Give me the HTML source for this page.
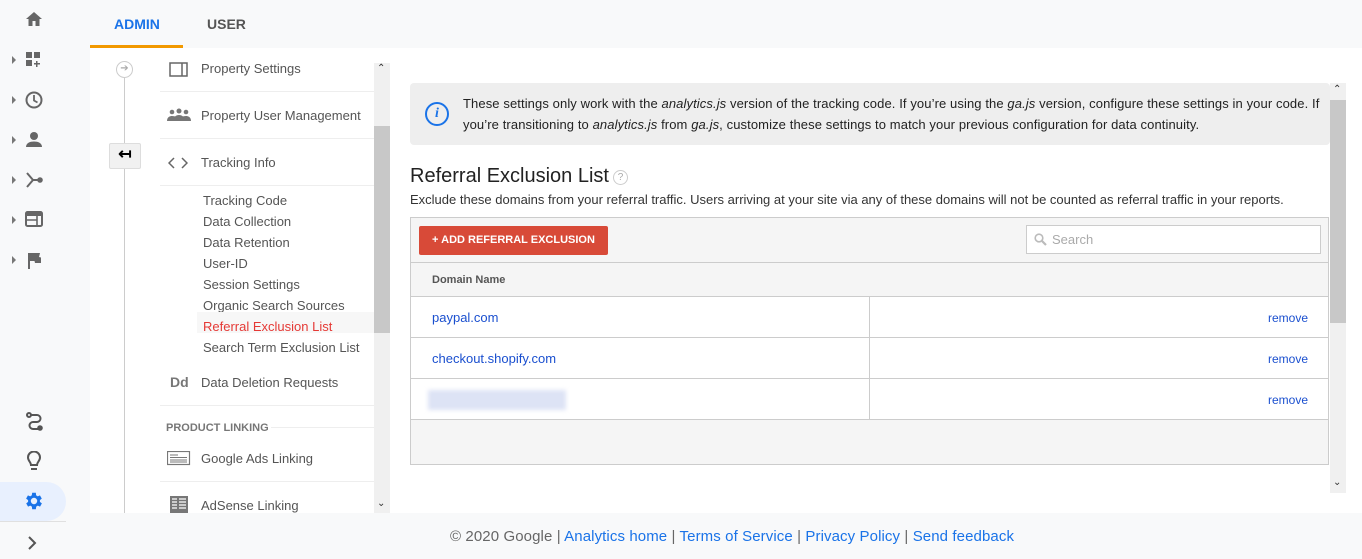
<!DOCTYPE html>
<html><head><meta charset="utf-8"><style>
*{box-sizing:border-box;margin:0;padding:0}
body{width:1362px;height:559px;overflow:hidden;background:#f8f9fa;font-family:"Liberation Sans",Arial,sans-serif;position:relative;color:#333}
.abs{position:absolute}
.nav svg{position:absolute}
.tri{position:absolute;left:12px;width:0;height:0;border-left:4px solid #777;border-top:4px solid transparent;border-bottom:4px solid transparent}
.item{position:absolute;left:160px;width:214px;font-size:13px;color:#555;border-bottom:1px solid #eee}
.item span{position:absolute;left:41px}
.sub{position:absolute;left:203px;font-size:13px;color:#555}
a{color:#1a4fcf;text-decoration:none}
</style></head><body>
<div class="nav">
<svg style="left:25px;top:11px" width="18" height="16" viewBox="0 0 18 16"><path d="M9 1L1 8h2.5v7h4v-5h3v5h4V8H17z" fill="#666"/></svg>
<div class="tri" style="top:56px"></div>
<svg style="left:25px;top:51px" width="18" height="18" viewBox="0 0 18 18" fill="#666"><rect x="1" y="1" width="6" height="6"/><rect x="9" y="1" width="6" height="6"/><rect x="1" y="9" width="6" height="6"/><path d="M11 10h1.5v2H15v1.5h-2.5V16H11v-2.5H9V12h2z"/></svg>
<div class="tri" style="top:96px"></div>
<svg style="left:24px;top:90px" width="20" height="20" viewBox="0 0 20 20"><circle cx="10" cy="10" r="7.5" fill="none" stroke="#666" stroke-width="2"/><path d="M10 5v5.5l3.5 2" fill="none" stroke="#666" stroke-width="1.8"/></svg>
<div class="tri" style="top:136px"></div>
<svg style="left:25px;top:131px" width="18" height="18" viewBox="0 0 18 18" fill="#666"><circle cx="9" cy="5" r="4"/><path d="M1 16c0-4 4-5.5 8-5.5s8 1.5 8 5.5z"/></svg>
<div class="tri" style="top:176px"></div>
<svg style="left:25px;top:171px" width="18" height="18" viewBox="0 0 18 18" fill="none" stroke="#666" stroke-width="2"><path d="M2 2l6 7-6 7M8 9h7"/><circle cx="15" cy="9" r="1.8" fill="#666"/></svg>
<div class="tri" style="top:216px"></div>
<svg style="left:25px;top:211px" width="18" height="16" viewBox="0 0 18 16"><rect x="1" y="1" width="16" height="14" rx="1.5" fill="none" stroke="#666" stroke-width="2"/><rect x="1" y="1" width="16" height="4" fill="#666"/><path d="M12 5v10M2 9h10" stroke="#666" stroke-width="1.6"/></svg>
<div class="tri" style="top:256px"></div>
<svg style="left:27px;top:252px" width="16" height="17" viewBox="0 0 16 17" fill="#666"><path d="M1 1h12l-1 4 2 .5V11H8l-.5-2H3v8H1z"/></svg>
<svg style="left:25px;top:411px" width="20" height="20" viewBox="0 0 20 20" fill="none" stroke="#555" stroke-width="2"><circle cx="4" cy="4" r="2"/><path d="M6 4h6a3.5 3.5 0 010 7H8a3.5 3.5 0 000 7h6"/><circle cx="15" cy="17" r="1.8" fill="#555"/></svg>
<svg style="left:27px;top:451px" width="14" height="20" viewBox="0 0 14 20" fill="none" stroke="#555" stroke-width="2"><path d="M4 14c0-3-3-4-3-7.5a6 6 0 0112 0c0 3.5-3 4.5-3 7.5z"/><path d="M4 18h6"/></svg>
</div>
<div class="abs" style="left:0;top:482px;width:66px;height:39px;background:#e8f0fe;border-radius:0 20px 20px 0"></div>
<svg class="abs" style="left:23px;top:490px" width="22" height="22" viewBox="0 0 24 24"><path fill="#1a73e8" d="M19.4 13a7.5 7.5 0 000-2l2.1-1.6-2-3.5-2.5 1a7 7 0 00-1.7-1L15 3h-4l-.4 2.9a7 7 0 00-1.7 1l-2.5-1-2 3.5L6.6 11a7.5 7.5 0 000 2l-2.1 1.6 2 3.5 2.5-1a7 7 0 001.7 1L11 21h4l.4-2.9a7 7 0 001.7-1l2.5 1 2-3.5zM13 15.5a3.5 3.5 0 110-7 3.5 3.5 0 010 7z" transform="translate(-1 0)"/></svg>
<div class="abs" style="left:0;top:521px;width:66px;height:1px;background:#e0e0e0"></div>
<svg class="abs" style="left:27px;top:535px" width="10" height="16" viewBox="0 0 10 16"><path d="M2 2l6 6-6 6" fill="none" stroke="#555" stroke-width="2"/></svg>

<div class="abs" style="left:114px;top:16px;font-size:14px;color:#1a73e8;font-weight:bold">ADMIN</div>
<div class="abs" style="left:207px;top:16px;font-size:14px;color:#555;font-weight:bold">USER</div>
<div class="abs" style="left:90px;top:45px;width:93px;height:3px;background:#f29900"></div>
<div class="abs" style="left:90px;top:48px;width:1272px;height:465px;background:#fff"></div>

<div class="abs" style="left:124px;top:68px;width:1px;height:445px;background:#ccc"></div>
<div class="abs" style="left:116px;top:61px;width:17px;height:17px;border:1px solid #ccc;border-radius:50%;background:#fff;font-size:10px;color:#aaa;text-align:center;line-height:14px">➔</div>
<div class="abs" style="left:109px;top:143px;width:32px;height:26px;background:#f1f1f1;border:1px solid #ddd;border-radius:2px;font-size:16px;text-align:center;line-height:22px;color:#000;font-weight:bold">↤</div>

<div class="item" style="top:48px;height:44px"><svg class="abs" style="left:9px;top:14px" width="19" height="15"><rect x="1" y="1" width="17" height="13" fill="none" stroke="#666" stroke-width="1.5"/><path d="M13 1v13" stroke="#666" stroke-width="1.5"/></svg><span style="top:13px">Property Settings</span></div>
<div class="item" style="top:92px;height:47px"><svg class="abs" style="left:7px;top:16px" width="24" height="14" fill="#777"><circle cx="5" cy="4" r="2.3"/><circle cx="12" cy="3" r="2.5"/><circle cx="19" cy="4" r="2.3"/><path d="M0 13c0-4 3-5 5-5s3 .5 3 .5c1-1 2.5-1.5 4-1.5s3 .5 4 1.5c0 0 1-.5 3-.5s5 1 5 5z"/></svg><span style="top:16px">Property User Management</span></div>
<div class="item" style="top:139px;height:47px"><svg class="abs" style="left:8px;top:18px" width="20" height="12" fill="none" stroke="#666" stroke-width="1.5"><path d="M6 1L1 6l5 5M14 1l5 5-5 5"/></svg><span style="top:16px">Tracking Info</span></div>
<div class="sub" style="top:193px">Tracking Code</div>
<div class="sub" style="top:214px">Data Collection</div>
<div class="sub" style="top:235px">Data Retention</div>
<div class="sub" style="top:256px">User-ID</div>
<div class="sub" style="top:277px">Session Settings</div>
<div class="sub" style="top:298px">Organic Search Sources</div>
<div class="abs" style="left:197px;top:312px;width:177px;height:21px;background:#f7f7f7"></div>
<div class="sub" style="top:319px;color:#e53935">Referral Exclusion List</div>
<div class="sub" style="top:340px">Search Term Exclusion List</div>
<div class="item" style="top:360px;height:46px"><b class="abs" style="left:10px;top:14px;font-size:14px;color:#777">Dd</b><span style="top:15px">Data Deletion Requests</span></div>
<div class="abs" style="left:166px;top:422px;font-size:11px;font-weight:bold;color:#777">PRODUCT LINKING</div>
<div class="abs" style="left:271px;top:427px;width:103px;height:1px;background:#eee"></div>
<div class="item" style="top:436px;height:46px;"><svg class="abs" style="left:7px;top:15px" width="24" height="15" fill="none" stroke="#777" stroke-width="1.2"><rect x=".5" y=".5" width="22" height="13"/><path d="M3 4h8M3 6.5h17M3 9h17M3 11h17" stroke-width="1"/></svg><span style="top:15px">Google Ads Linking</span></div>
<div class="item" style="top:482px;height:31px;border:none"><svg class="abs" style="left:10px;top:14px" width="18" height="17" fill="#777"><rect x="0" y="0" width="18" height="17"/><path d="M2 3h5M2 6h5M2 9h5M2 12h5M9 3h7M9 6h7M9 9h7M9 12h7" stroke="#fff" stroke-width="1.3"/></svg><span style="top:16px">AdSense Linking</span></div>

<div class="abs" style="left:374px;top:63px;width:16px;height:450px;background:#f0f0f0"></div>
<div class="abs" style="left:374px;top:126px;width:16px;height:207px;background:#c8c8c8"></div>
<div class="abs" style="left:377px;top:63px;font-size:10px;color:#333">⌃</div>
<div class="abs" style="left:377px;top:498px;font-size:10px;color:#333">⌄</div>

<div class="abs" style="left:410px;top:83px;width:920px;height:62px;background:#eee;border-radius:4px"></div>
<div class="abs" style="left:425px;top:102px;width:24px;height:24px;border:2.5px solid #1a73e8;border-radius:50%;color:#1a73e8;font:italic bold 14px 'Liberation Serif',serif;text-align:center;line-height:19px">i</div>
<div class="abs" style="left:463px;top:93px;width:865px;font-size:13px;line-height:21px;color:#222;letter-spacing:0.1px">These settings only work with the <i>analytics.js</i> version of the tracking code. If you’re using the <i>ga.js</i> version, configure these settings in your code. If you’re transitioning to <i>analytics.js</i> from <i>ga.js</i>, customize these settings to match your previous configuration for data continuity.</div>
<div class="abs" style="left:410px;top:165px;font-size:20px;color:#222">Referral Exclusion List</div>
<div class="abs" style="left:613px;top:170px;width:15px;height:15px;border:1px solid #ccc;border-radius:50%;font-size:10px;color:#aaa;text-align:center;line-height:13px">?</div>
<div class="abs" style="left:410px;top:192px;font-size:13px;color:#333">Exclude these domains from your referral traffic. Users arriving at your site via any of these domains will not be counted as referral traffic in your reports.</div>

<div class="abs" style="left:410px;top:217px;width:919px;height:248px;background:#f5f5f5;border:1px solid #ccc"></div>
<div class="abs" style="left:419px;top:226px;width:189px;height:29px;background:#d84a38;border-radius:2px;color:#fff;font-size:11px;font-weight:bold;text-align:center;line-height:29px">+ ADD REFERRAL EXCLUSION</div>
<div class="abs" style="left:1026px;top:225px;width:295px;height:29px;background:#fff;border:1px solid #ccc"></div>
<svg class="abs" style="left:1034px;top:233px" width="13" height="13" fill="none" stroke="#bbb" stroke-width="1.6"><circle cx="5" cy="5" r="3.8"/><path d="M8 8l4 4" stroke-width="2.2"/></svg>
<div class="abs" style="left:1052px;top:232px;font-size:13px;color:#aaa">Search</div>
<div class="abs" style="left:411px;top:262px;width:917px;height:1px;background:#ccc"></div>
<div class="abs" style="left:432px;top:274px;font-size:11px;font-weight:bold;color:#555">Domain Name</div>
<div class="abs" style="left:411px;top:296px;width:917px;height:124px;background:#fff;border-top:1px solid #ccc;border-bottom:1px solid #ccc"></div>
<div class="abs" style="left:411px;top:337px;width:917px;height:1px;background:#ccc"></div>
<div class="abs" style="left:411px;top:378px;width:917px;height:1px;background:#ccc"></div>
<div class="abs" style="left:869px;top:297px;width:1px;height:122px;background:#ccc"></div>
<div class="abs" style="left:432px;top:310px;font-size:13px"><a>paypal.com</a></div>
<div class="abs" style="left:432px;top:351px;font-size:13px"><a>checkout.shopify.com</a></div>
<div class="abs" style="left:428px;top:390px;width:138px;height:20px;background:#dde3f5;filter:blur(2px)"></div>
<div class="abs" style="left:1268px;top:311px;font-size:12px"><a>remove</a></div>
<div class="abs" style="left:1268px;top:352px;font-size:12px"><a>remove</a></div>
<div class="abs" style="left:1268px;top:393px;font-size:12px"><a>remove</a></div>

<div class="abs" style="left:1330px;top:83px;width:16px;height:410px;background:#f0f0f0"></div>
<div class="abs" style="left:1330px;top:100px;width:16px;height:223px;background:#c8c8c8"></div>
<div class="abs" style="left:1333px;top:84px;font-size:10px;color:#333">⌃</div>
<div class="abs" style="left:1333px;top:477px;font-size:10px;color:#333">⌄</div>

<div class="abs" style="left:450px;top:528px;font-size:15px;letter-spacing:0.1px;color:#666">© 2020 Google | <a style="color:#1a73e8">Analytics home</a> | <a style="color:#1a73e8">Terms of Service</a> | <a style="color:#1a73e8">Privacy Policy</a> | <a style="color:#1a73e8">Send feedback</a></div>
</body></html>
